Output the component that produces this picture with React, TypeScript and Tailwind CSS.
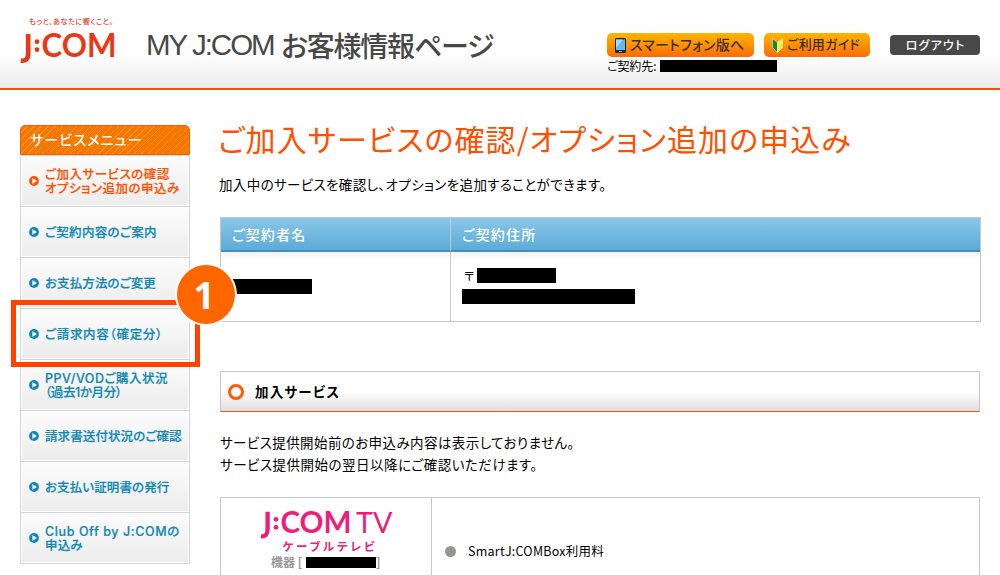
import clsx from "clsx";

const menu = [
  { lines: ["ご加入サービスの確認", "オプション追加の申込み"], active: true, spacing: ["tracking-[0.5px]", "tracking-[0.5px]"] },
  { lines: ["ご契約内容のご案内"], spacing: ["tracking-[0.3px]"] },
  { lines: ["お支払方法のご変更"], spacing: ["tracking-[0.1px]"] },
  { lines: ["ご請求内容（確定分）"], spacing: ["tracking-[0.7px]"] },
  { lines: ["PPV/VODご購入状況", "（過去1か月分）"], spacing: ["tracking-[0.5px]", "tracking-[-0.4px]"] },
  { lines: ["請求書送付状況のご確認"], spacing: ["tracking-[0.1px]"] },
  { lines: ["お支払い証明書の発行"], spacing: ["tracking-[0.1px]"] },
  { lines: ["Club Off by J:COMの", "申込み"], spacing: ["tracking-[0.6px]", "tracking-[0.2px]"] },
];

function Redacted({ className }: { className: string }) {
  return <span className={clsx("block shrink-0 bg-black", className)} />;
}

function Logo() {
  return (
    <svg className="block h-[54px] w-[100px] overflow-visible" viewBox="0 0 100 54">
      <text x="9" y="9" fontSize="7.2" fontWeight="500" fill="#e9421e" textLength="84">
        もっと、あなたに響くこと。
      </text>
      <g fill="#ea3815" fontFamily="Lato, sans-serif" fontWeight="700">
        <path d="M8.2 19V38.5q0 8.3-7.4 7" fill="none" stroke="#ea3815" strokeWidth="4.6" />
        <circle cx="17" cy="26.7" r="2.4" />
        <circle cx="17" cy="34.7" r="2.4" />
        <text x="21.5" y="42" fontSize="31.5" textLength="75" lengthAdjust="spacingAndGlyphs">
          COM
        </text>
      </g>
    </svg>
  );
}

function TvLogo() {
  return (
    <svg className="block h-[44px] w-[134px] overflow-visible" viewBox="0 0 134 44" fill="#ec1e79">
      <path d="M6.6 .7V18q0 8.2-6.6 7.2" fill="none" stroke="#ec1e79" strokeWidth="4.3" />
      <circle cx="15" cy="8.3" r="2.4" />
      <circle cx="15" cy="16.3" r="2.4" />
      <g fontFamily="Lato, sans-serif">
        <text x="19.5" y="22" fontSize="29.5" fontWeight="700" textLength="71" lengthAdjust="spacingAndGlyphs">
          COM
        </text>
        <text x="95" y="22" fontSize="29.5" textLength="36.5" lengthAdjust="spacingAndGlyphs">
          TV
        </text>
      </g>
      <text x="21.5" y="40" fontSize="11.5" fontWeight="700" textLength="92">
        ケーブルテレビ
      </text>
    </svg>
  );
}

function PhoneIcon() {
  return (
    <svg className="block h-[15px] w-[11px]" viewBox="0 0 11 15">
      <rect width="11" height="15" rx="1.5" fill="#16263a" />
      <rect x="1" y="1.5" width="9" height="10.5" fill="#65b9ee" />
      <path d="M1 1.5h7L1 10z" fill="#a5dafa" />
      <rect x="4" y="13" width="3" height="1" fill="#8fa4b4" />
    </svg>
  );
}

function BeginnerIcon() {
  return (
    <svg className="block h-[15px] w-[11px]" viewBox="0 0 11 15">
      <path d="M.5 .5L5.5 4.5v10L.5 9.5z" fill="#16833b" stroke="#e8f3c8" strokeWidth=".6" />
      <path d="M10.5 .5l-5 4v10l5-5z" fill="#f8ef38" stroke="#fff" strokeWidth=".6" />
    </svg>
  );
}

function Bullet() {
  return (
    <svg className="block size-[10px] shrink-0" viewBox="0 0 10 10">
      <circle cx="5" cy="5" r="4.9" fill="currentColor" />
      <path d="M3.4 2L7.9 5 3.4 8z" fill="#fff" />
    </svg>
  );
}

function Header() {
  return (
    <header className="flex h-[90px] items-start border-b-2 border-[#ff4a00] bg-linear-to-b from-white from-60% to-[#ececec] pr-5 pl-5">
      <div className="pt-[15px]">
        <Logo />
      </div>
      <div className="ml-[26px] flex pt-[25px] leading-10 whitespace-nowrap text-[#484848]">
        <span className="w-[135px] font-['Liberation_Sans'] text-[29.5px] tracking-[-2px]">MY J:COM</span>
        <span className="text-[28px] font-medium tracking-[-1.2px]">お客様情報ページ</span>
      </div>
      <div className="ml-auto flex w-[373px] pt-[33px] whitespace-nowrap">
        <div className="w-[157px]">
          <div className="flex h-6 w-[147px] items-center rounded-[5px] bg-linear-to-b from-[#ffb400] to-[#ff6a00] pl-2">
            <PhoneIcon />
            <span className="-mt-[2px] ml-1 text-[14px] leading-6 font-medium tracking-[0.2px] text-[#3f3020]">
              スマートフォン版へ
            </span>
          </div>
          <div className="mt-[3px] flex h-3 text-[12px] leading-3 text-black">
            <span className="w-[53px] shrink-0 tracking-[-0.1px]">ご契約先:</span>
            <Redacted className="h-3 w-[117px]" />
          </div>
        </div>
        <div className="flex h-6 w-[106px] items-center rounded-[5px] bg-linear-to-b from-[#ffb400] to-[#ff6a00] pl-2">
          <BeginnerIcon />
          <span className="-mt-[2px] ml-1 text-[13px] leading-6 font-medium tracking-[0.2px] text-[#3f3020]">
            ご利用ガイド
          </span>
        </div>
        <div className="mt-[2px] ml-5 h-5 w-[90px] rounded bg-[#484848] pl-px text-center text-[12px] leading-5 font-medium tracking-[1.2px] text-white">
          ログアウト
        </div>
      </div>
    </header>
  );
}

function Sidebar() {
  return (
    <nav className="w-[170px] shrink-0">
      <h2 className="h-[30px] rounded-t-[5px] border border-[#ff5a00] bg-[repeating-linear-gradient(135deg,#f57600_0px,#f57600_4px,#fa8f1c_4px,#fa8f1c_5px)] pl-[9px] text-[14px] leading-[27px] font-medium tracking-[1.2px] text-white">
        サービスメニュー
      </h2>
      <ul className="border-x border-t border-[#d4d4d4]">
        {menu.map((item) => (
          <li
            key={item.lines[0]}
            className={clsx(
              "flex h-[51px] items-center border-b border-[#d4d4d4] bg-linear-to-b from-[#fcfcfc] to-[#ececec] pl-2 shadow-[inset_0_0_0_1px_#fff]",
              item.active ? "text-[#ff5200]" : "text-[#0e87b4]"
            )}
          >
            <Bullet />
            <div className="mt-[2px] ml-[6px] font-['Inter','Noto_Sans_CJK_JP',sans-serif] text-[12.5px] leading-[14px] font-medium whitespace-nowrap [-webkit-text-stroke:0.2px]">
              {item.lines.map((line, i) => (
                <div key={line} className={item.spacing[i]}>
                  {line}
                </div>
              ))}
            </div>
          </li>
        ))}
      </ul>
    </nav>
  );
}

function ContractTable() {
  return (
    <div className="mt-[22px] grid h-[105px] w-[761px] grid-cols-[230px_1fr] grid-rows-[34px_1fr] border border-[#c8c8c8]">
      {["ご契約者名", "ご契約住所"].map((label, i) => (
        <div
          key={label}
          className={clsx(
            "border-b-2 border-[#4190bf] bg-linear-to-b from-[#89c7e8] to-[#5cabd8] pl-[11px] text-[14px] leading-[32px] font-medium tracking-[1.2px] text-white",
            i === 0 && "border-r border-r-[#c8c8c8]"
          )}
        >
          {label}
        </div>
      ))}
      <div className="border-r border-[#c8c8c8] bg-linear-to-b from-[#f3f3f3] to-white to-[10px] pt-[27px] pl-3">
        <Redacted className="h-[15px] w-[79px]" />
      </div>
      <div className="bg-linear-to-b from-[#f3f3f3] to-white to-[10px] pt-4 pl-[11px]">
        <div className="flex h-[15px] text-[12px] leading-[15px]">
          <span className="w-[15px] pl-[2px]">〒</span>
          <Redacted className="h-[15px] w-[79px]" />
        </div>
        <Redacted className="mt-[6px] h-[15px] w-[173px]" />
      </div>
    </div>
  );
}

export default function App() {
  return (
    <div className="relative h-[575px] w-[1000px] overflow-hidden bg-white font-['Noto_Sans_CJK_JP',sans-serif] [font-feature-settings:'palt']">
      <Header />
      <div className="flex pt-[35px] pl-5">
        <Sidebar />
        <main className="ml-[30px] w-[761px] whitespace-nowrap">
          <h1 className="-mt-[2px] -ml-[2px] h-[30px] text-[30px] leading-[30px] tracking-[1.1px] text-[#ff5000]">
            ご加入サービスの確認/オプション追加の申込み
          </h1>
          <p className="mt-[21px] -ml-px text-[13.5px] leading-[21px] tracking-[0.37px]">
            加入中のサービスを確認し、オプションを追加することができます。
          </p>
          <ContractTable />
          <div className="mt-[49px] flex h-[41px] w-[760px] items-center border border-[#c8c8c8] border-b-[#e95513] bg-linear-to-b from-white from-50% to-[#dedede] pl-[7px]">
            <span className="block size-4 rounded-full border-[3.5px] border-[#ff5a0a] bg-white" />
            <span className="-mt-px ml-[11px] text-[13.5px] font-bold tracking-[1.2px]">加入サービス</span>
          </div>
          <p className="mt-[19px] h-[45px] text-[13.5px] leading-[22px]">
            <span className="tracking-[0.42px]">サービス提供開始前のお申込み内容は表示しておりません。</span>
            <br />
            <span className="tracking-[0.5px]">サービス提供開始の翌日以降にご確認いただけます。</span>
          </p>
          <div className="mt-[21px] flex h-[100px] w-[760px] border border-[#c8c8c8]">
            <div className="w-[211px] border-r border-[#c8c8c8] pt-[13px] pl-10">
              <TvLogo />
              <div className="ml-[10px] flex text-[12px] leading-[14px] font-bold text-[#999]">
                <span className="w-[35px]">機器 [</span>
                <Redacted className="mt-[2px] h-[11px] w-[70px]" />
                <span>]</span>
              </div>
            </div>
            <div className="flex h-[107px] items-center pl-[13px]">
              <span className="block size-[11px] rounded-full bg-[#9a9590]" />
              <span className="ml-[12px] text-[12.5px] tracking-[0.25px]">SmartJ:COMBox利用料</span>
            </div>
          </div>
        </main>
      </div>

      {/* step callout over the billing menu item */}
      <div className="absolute top-[300px] left-[11px] h-[67px] w-[189px] border-5 border-[#ff4200]" />
      <div className="absolute top-[263px] left-[175px] flex h-[63px] w-[62px] items-center justify-center rounded-[50%] border-2 border-white bg-[#ff6600] pt-px pr-[4px] font-['Open_Sans'] text-[37px] font-bold text-white">
        1
      </div>
    </div>
  );
}
